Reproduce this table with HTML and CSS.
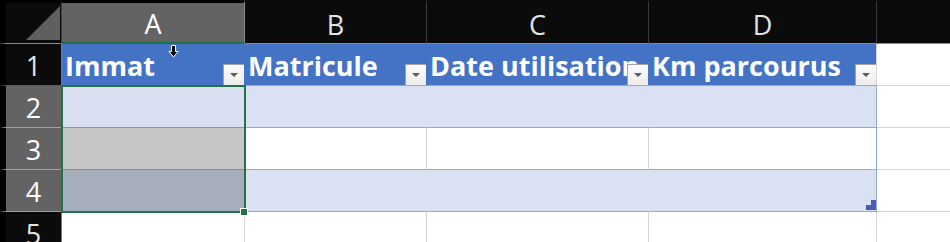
FILE: index.html
```html
<!DOCTYPE html>
<html lang="fr">
<head>
<meta charset="utf-8">
<title>Feuil1</title>
<link rel="stylesheet" href="styles.css">
</head>
<body>
<div class="sheet">
  <!-- column headers -->
  <div class="corner">
    <svg class="corner-tri" width="36" height="36" viewBox="0 0 36 36"><polygon points="35,1 35,35 1,35" fill="#5f5f5f"/></svg>
  </div>
  <div class="ch ch-sel">A</div>
  <div class="ch">B</div>
  <div class="ch">C</div>
  <div class="ch">D</div>
  <div class="ch ch-empty"></div>

  <!-- row 1 : table header -->
  <div class="rh">1</div>
  <div class="c hd"><span class="lbl">Immat</span><span class="flt"></span></div>
  <div class="c hd"><span class="lbl">Matricule</span><span class="flt"></span></div>
  <div class="c hd"><span class="lbl">Date utilisation</span><span class="flt"></span></div>
  <div class="c hd hd-last"><span class="lbl">Km parcourus</span><span class="flt"></span></div>
  <div class="c out"></div>

  <!-- row 2 -->
  <div class="rh rh-sel">2</div>
  <div class="c a2"></div>
  <div class="c band"></div>
  <div class="c band"></div>
  <div class="c band last"></div>
  <div class="c out"></div>

  <!-- row 3 -->
  <div class="rh rh-sel">3</div>
  <div class="c a3"></div>
  <div class="c plain"></div>
  <div class="c plain"></div>
  <div class="c plain last"></div>
  <div class="c out"></div>

  <!-- row 4 -->
  <div class="rh rh-sel">4</div>
  <div class="c a4"></div>
  <div class="c band"></div>
  <div class="c band"></div>
  <div class="c band last"><span class="resize"></span></div>
  <div class="c out"></div>

  <!-- row 5 -->
  <div class="rh">5</div>
  <div class="c empty"></div>
  <div class="c empty"></div>
  <div class="c empty"></div>
  <div class="c empty"></div>
  <div class="c out"></div>

  <!-- selection A2:A4 -->
  <div class="selection"></div>
  <div class="fill-handle"></div>

  <!-- column-select pointer -->
  <svg class="pointer" width="11" height="13" viewBox="0 0 11 13">
    <path d="M3.5 0.5 H7.5 V6.5 H10 L5.5 12 L1 6.5 H3.5 Z" fill="#000" stroke="#fff" stroke-width="1"/>
  </svg>
</div>
</body>
</html>
```

FILE: styles.css
```css
* { box-sizing: border-box; }

html, body {
  margin: 0;
  padding: 0;
  width: 950px;
  height: 242px;
  overflow: hidden;
  background: #000;
}

.sheet {
  position: relative;
  display: grid;
  grid-template-columns: 62px 183px 182px 222px 228px 1fr;
  grid-template-rows: 44px 42px 42px 42px 42px 42px;
  font-family: "Open Sans", "Noto Sans", sans-serif;
}

/* ---- column header strip ---- */
.corner {
  background: #0b0b0b;
  border-left: 6px solid #000;
  border-top: 3px solid #000;
  border-bottom: 1px solid #8a8a8a;
  border-right: 1px solid #3d3d3d;
  position: relative;
}
.corner-tri {
  position: absolute;
  right: 0;
  bottom: 2px;
}

.ch {
  background: #0b0b0b;
  color: #e4e4e4;
  font-size: 27px;
  font-weight: 400;
  display: flex;
  align-items: center;
  justify-content: center;
  padding-top: 2px;
  border-top: 3px solid #0b0b0b;
  border-right: 1px solid #3d3d3d;
  border-bottom: 1px solid #8a8a8a;
}
.ch-sel {
  background: #636363;
  color: #fff;
  border-right-color: #8a8a8a;
  border-top-color: #000;
  border-bottom: 2px solid #217346;
}
.ch-empty { border-right: none; }

/* ---- row headers ---- */
.rh {
  background: #0b0b0b;
  color: #e4e4e4;
  font-size: 27px;
  display: flex;
  align-items: center;
  justify-content: center;
  padding-top: 1px;
  border-left: 6px solid #000;
  border-right: 1px solid #7a7a7a;
  border-bottom: 1px solid #5a5a5a;
}
.rh-sel {
  background: #636363;
  color: #fff;
  border-bottom-color: #a0a0a0;
}

/* ---- cells ---- */
.c {
  position: relative;
  background: #fff;
  border-right: 1px solid #d4d4d4;
  border-bottom: 1px solid #d4d4d4;
}

.hd {
  background: #4472c4;
  color: #fff;
  font-size: 27px;
  font-weight: 700;
  border-right-color: #4472c4;
  border-bottom-color: #8ea9db;
  overflow: hidden;
  display: flex;
  align-items: center;
  padding-left: 3px;
  padding-top: 1px;
}
.hd-last { border-right-color: #d4d4d4; }
.lbl { white-space: nowrap; }

.flt {
  position: absolute;
  right: -1px;
  bottom: -1px;
  width: 22px;
  height: 22px;
  background: linear-gradient(#fafafa, #ececec);
  border: 1px solid #a3a3a3;
}
.flt::after {
  content: "";
  position: absolute;
  left: 6px;
  top: 8px;
  border-left: 4px solid transparent;
  border-right: 4px solid transparent;
  border-top: 4px solid #5c5c5c;
}

.band {
  background: #d9e1f2;
  border-right-color: #d9e1f2;
  border-bottom-color: #8ea9db;
}
.plain { border-bottom-color: #8ea9db; }
.last { border-right-color: #8ea9db; }

.a2 { background: #dae0f1; border-bottom-color: #7f95c0; }
.a3 { background: #c6c6c6; border-bottom-color: #7f95c0; }
.a4 { background: #a7aebb; border-bottom-color: #8ea9db; }

.empty { border-bottom-color: #d4d4d4; }
.out { border-right: none; }

/* table resize grip */
.resize {
  position: absolute;
  right: 0;
  bottom: 1px;
  width: 10px;
  height: 10px;
  background:
    linear-gradient(#4a5bb4, #4a5bb4) right top / 5px 5px no-repeat,
    linear-gradient(#4a5bb4, #4a5bb4) left bottom / 10px 5px no-repeat;
}

/* ---- selection overlay ---- */
.selection {
  position: absolute;
  left: 61px;
  top: 85px;
  width: 185px;
  height: 128px;
  border: 2px solid #217346;
  pointer-events: none;
}
.fill-handle {
  position: absolute;
  left: 240px;
  top: 208px;
  width: 8px;
  height: 8px;
  background: #217346;
  border: 1px solid #fff;
}

.pointer {
  position: absolute;
  left: 168px;
  top: 45px;
}
```
